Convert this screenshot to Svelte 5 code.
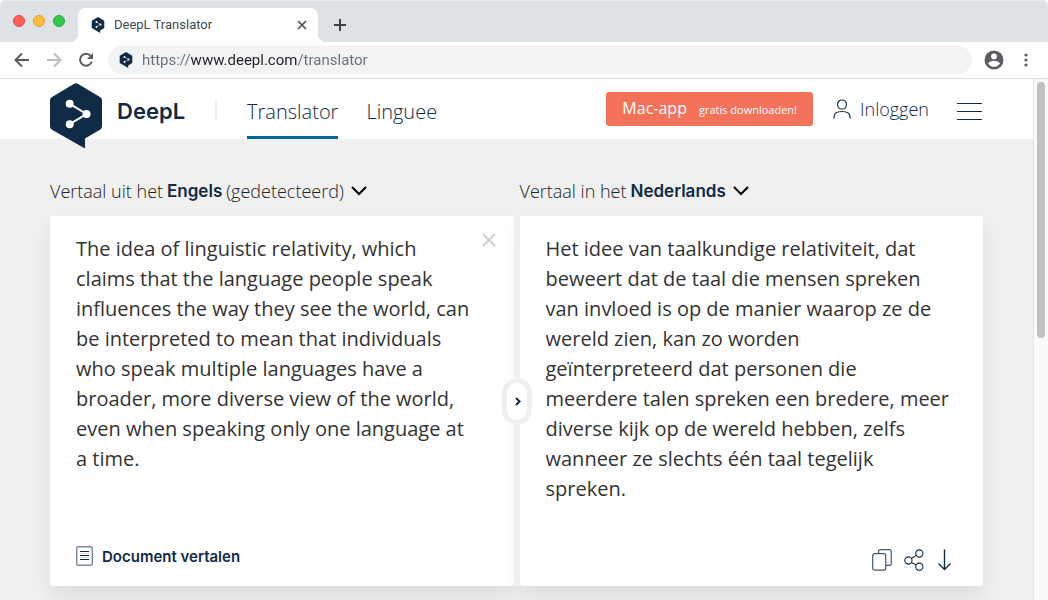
<script>
  let url = $state('https://www.deepl.com/translator');
  let source = $state(
    'The idea of linguistic relativity, which claims that the language people speak influences the way they see the world, can be interpreted to mean that individuals who speak multiple languages have a broader, more diverse view of the world, even when speaking only one language at a time.'
  );
  let target = $state(
    'Het idee van taalkundige relativiteit, dat beweert dat de taal die mensen spreken van invloed is op de manier waarop ze de wereld zien, kan zo worden geïnterpreteerd dat personen die meerdere talen spreken een bredere, meer diverse kijk op de wereld hebben, zelfs wanneer ze slechts één taal tegelijk spreken.'
  );
</script>

{#snippet logo()}
  <svg class="logo-mark" viewBox="0 0 52 66" aria-hidden="true">
    <path fill="#0f2b46" d="M0 17.5c0-1.5.7-2.6 2-3.4L24.2.7a3.6 3.6 0 0 1 3.6 0L50 14.1c1.3.8 2 1.9 2 3.4v25.8c0 1.5-.7 2.6-2 3.4L35 55.5V65.5L2 46.7c-1.300-.8-2-1.900-2-3.400z" />
    <path fill="none" stroke="#fff" stroke-width="2" d="M19.700 20.800 36.500 31 19.700 41.200" />
    <circle cx="19.700" cy="20.800" r="4" fill="#fff" />
    <circle cx="36.500" cy="31" r="4" fill="#fff" />
    <circle cx="19.700" cy="41.200" r="4" fill="#fff" />
  </svg>
{/snippet}

{#snippet chevron()}
  <svg class="chevron" width="16" height="10" viewBox="0 0 16 10" aria-hidden="true">
    <path d="m1 1 7 7 7-7" fill="none" stroke="#000" stroke-width="2" />
  </svg>
{/snippet}

<div class="browser">
  <div class="tab-strip">
    <div class="lights">
      <button class="light red" aria-label="Close window"></button>
      <button class="light yellow" aria-label="Minimise window"></button>
      <button class="light green" aria-label="Zoom window"></button>
    </div>
    <div class="tab">
      <span class="favicon">{@render logo()}</span>
      <span class="tab-title">DeepL Translator</span>
      <button class="icon-button" aria-label="Close tab">
        <svg width="10" height="10" viewBox="0 0 10 10"><path d="m1 1 8 8M9 1 1 9" fill="none" stroke="#45494d" stroke-width="1.600" /></svg>
      </button>
    </div>
    <button class="icon-button new-tab" aria-label="New tab">
      <svg width="12" height="12" viewBox="0 0 12 12"><path d="M6 0v12M0 6h12" fill="none" stroke="#3c4043" stroke-width="2" /></svg>
    </button>
  </div>

  <div class="toolbar">
    <button class="icon-button" aria-label="Back">
      <svg width="16" height="16" viewBox="0 0 16 16"><path d="M15 8H2M8 1.500 1.500 8 8 14.500" fill="none" stroke="#5a5e62" stroke-width="2" /></svg>
    </button>
    <button class="icon-button" aria-label="Forward">
      <svg width="16" height="16" viewBox="0 0 16 16"><path d="M1 8h13M8 1.500 14.500 8 8 14.500" fill="none" stroke="#babcbe" stroke-width="2" /></svg>
    </button>
    <button class="icon-button" aria-label="Reload">
      <svg width="16" height="16" viewBox="0 0 16 16">
        <path d="M12.700 3.800A6 6 0 1 0 13.800 9.500" fill="none" stroke="#5a5e62" stroke-width="2" />
        <path d="M15 1v6H9z" fill="#5a5e62" />
      </svg>
    </button>
    <div class="address">
      <span class="favicon">{@render logo()}</span>
      <input type="text" bind:value={url} aria-label="Address" spellcheck="false" />
    </div>
    <button class="icon-button profile" aria-label="Profile">
      <svg width="20" height="20" viewBox="0 0 20 20">
        <circle cx="10" cy="10" r="9.500" fill="#5a5d62" />
        <circle cx="10" cy="6.400" r="2.900" fill="#fff" />
        <path d="M4 13.600c1-2 3.800-2.900 6-2.900s5 .9 6 2.900a7.200 7.200 0 0 1-12 0z" fill="#fff" />
      </svg>
    </button>
    <button class="icon-button" aria-label="Menu">
      <svg width="4" height="14" viewBox="0 0 4 14" fill="#5a5e62"><circle cx="2" cy="2" r="1.600" /><circle cx="2" cy="7" r="1.600" /><circle cx="2" cy="12" r="1.600" /></svg>
    </button>
  </div>

  <div class="viewport">
    <div class="page">
      <header>
        <a class="brand" href="/">
          <span class="brand-logo">{@render logo()}</span>
          <span class="brand-name">DeepL</span>
        </a>
        <nav>
          <a class="active" href="/translator">Translator</a>
          <a href="/linguee">Linguee</a>
        </nav>
        <a class="download" href="/app"><span>Mac-app</span><small>gratis downloaden!</small></a>
        <a class="login" href="/login">
          <svg width="18" height="20" viewBox="0 0 18 20" fill="none" stroke="#0f2b46" stroke-width="1.200">
            <rect x="4.600" y="1" width="8.800" height="9" rx="4.200" />
            <path d="M1 19.500v-1.500c0-3.500 3-5.500 8-5.500s8 2 8 5.500v1.500" />
          </svg>
          Inloggen
        </a>
        <button class="icon-button burger" aria-label="Open menu">
          <svg width="25" height="18" viewBox="0 0 25 18"><path d="M0 .5h25M0 8.500h25M0 16.500h25" stroke="#0f2b46" /></svg>
        </button>
      </header>

      <main>
        <section>
          <div class="lang-bar">
            <label for="source-lang">Vertaal uit het</label>
            <select id="source-lang">
              <option>Engels</option>
            </select>
            <span>(gedetecteerd)</span>
            {@render chevron()}
          </div>
          <div class="panel">
            <div class="text-row">
              <textarea bind:value={source} aria-label="Brontekst" spellcheck="false"></textarea>
              <button class="icon-button" aria-label="Wissen">
                <svg width="14" height="14" viewBox="0 0 14 14"><path d="m1 0 12 12M13 0 1 12" fill="none" stroke="#cfcfcf" stroke-width="2" /></svg>
              </button>
            </div>
            <div class="actions">
              <button class="document">
                <svg width="17" height="20" viewBox="0 0 17 20" fill="none" stroke="#0f2b46">
                  <rect x=".7" y=".7" width="15.600" height="18.600" rx="1.500" stroke="#7a8896" stroke-width="1.400" />
                  <path d="M4 5.500h9M4 9.500h9M4 13.500h9" />
                  <path d="M4 7.500h9M4 11.500h9" stroke="#b9c1c9" stroke-width=".5" />
                </svg>
                Document vertalen
              </button>
            </div>
          </div>
        </section>

        <section>
          <div class="lang-bar">
            <label for="target-lang">Vertaal in het</label>
            <select id="target-lang">
              <option>Nederlands</option>
            </select>
            {@render chevron()}
          </div>
          <div class="panel right">
            <div class="text-row">
              <textarea bind:value={target} aria-label="Vertaling" spellcheck="false"></textarea>
            </div>
            <div class="actions tools">
              <button class="icon-button" aria-label="Kopiëren">
                <svg width="20" height="22" viewBox="0 0 20 22" fill="none" stroke="#42586c" stroke-width="1.200">
                  <path d="M6.600 4.500V2.600c0-1.100.7-1.900 1.900-1.900h8.800c1.200 0 1.900.8 1.900 1.900v11.800c0 1.200-.7 1.900-1.900 1.900h-3.500" />
                  <rect x=".7" y="4.700" width="13" height="16.500" rx="2" />
                </svg>
              </button>
              <button class="icon-button" aria-label="Delen">
                <svg width="20" height="22" viewBox="0 0 20 22" fill="none" stroke="#0f2b46" stroke-width="1.100">
                  <circle cx="4.400" cy="11.500" r="3.600" />
                  <circle cx="15.300" cy="4.500" r="3.600" />
                  <circle cx="15.300" cy="17.700" r="3.600" />
                  <path d="m7.400 9.500 4.900-3.100M7.400 13.400l4.900 2.500" />
                </svg>
              </button>
              <button class="icon-button" aria-label="Opslaan">
                <svg width="16" height="22" viewBox="0 0 16 22" fill="none" stroke="#0f2b46" stroke-width="1.400"><path d="M8.500 .5v20M2.500 14.500l6 6 6-6" /></svg>
              </button>
            </div>
            <button class="swap" aria-label="Talen omwisselen">
              <svg width="7" height="9" viewBox="0 0 7 9"><path d="m2 1 3.600 3.500L2 8" fill="none" stroke="#0f2b46" stroke-width="2" /></svg>
            </button>
          </div>
        </section>
      </main>
    </div>
    <div class="scrollbar"><div class="thumb"></div></div>
  </div>
</div>

<style>
  :global(body) {
    margin: 0;
    background: #fff;
  }

  .browser,
  .browser * {
    box-sizing: border-box;
  }

  .browser {
    display: flex;
    flex-direction: column;
    height: 100vh;
    overflow: hidden;
    border-radius: 6px 6px 0 0;
    font-family: 'Open Sans', 'Noto Sans', sans-serif;
    color: #0f2b46;
  }

  button,
  input,
  select,
  textarea {
    margin: 0;
    padding: 0;
    border: 0;
    background: none;
    color: inherit;
    font: inherit;
  }

  a {
    color: inherit;
    text-decoration: none;
  }

  svg {
    display: block;
    flex: none;
  }

  .icon-button {
    display: flex;
    flex: none;
  }

  .logo-mark {
    width: 100%;
    height: 100%;
  }

  .favicon {
    flex: none;
    width: 14px;
    height: 16px;
  }

  .tab-strip {
    display: flex;
    align-items: flex-end;
    flex: none;
    height: 42px;
    padding-left: 13px;
    border-top: 1px solid #e9ebed;
    background: #dee1e6;
  }

  .lights {
    display: flex;
    gap: 8px;
    padding-bottom: 15px;
  }

  .light {
    width: 12px;
    height: 12px;
    border: 1px solid #e2463f;
    border-radius: 50%;
    background: #fc615c;
  }

  .light.yellow {
    border-color: #dfa033;
    background: #fdbc40;
  }

  .light.green {
    border-color: #27ab35;
    background: #34c84a;
  }

  .tab {
    display: flex;
    align-items: center;
    gap: 9px;
    position: relative;
    width: 240px;
    height: 34px;
    margin-left: 13px;
    padding: 0 11px 1px 13px;
    border-radius: 8px 8px 0 0;
    background: #fff;
  }

  .tab::before,
  .tab::after {
    content: '';
    position: absolute;
    bottom: 0;
    width: 8px;
    height: 8px;
  }

  .tab::before {
    left: -8px;
    background: radial-gradient(circle at 0 0, transparent 8px, #fff 8px);
  }

  .tab::after {
    right: -8px;
    background: radial-gradient(circle at 100% 0, transparent 8px, #fff 8px);
  }

  .tab-title {
    flex: 1;
    font: 13px Roboto, sans-serif;
    color: #45494d;
  }

  .new-tab {
    padding: 0 0 11px 16px;
  }

  .toolbar {
    display: flex;
    align-items: center;
    flex: none;
    gap: 16px;
    height: 37px;
    padding: 0 20px 0 14px;
    border-bottom: 1px solid #dadce0;
    background: #fff;
  }

  .address {
    display: flex;
    align-items: center;
    flex: 1;
    gap: 9px;
    height: 28px;
    margin: 0 -4px 0 -2px;
    padding: 0 11px;
    border-radius: 14px;
    background: #f1f3f4;
  }

  /* the host part of the address is darker than the rest */
  .address input {
    flex: 1;
    min-width: 0;
    font: 15px Roboto, sans-serif;
    color: transparent;
    background: linear-gradient(90deg, #6b6f73 48px, #202124 48px, #202124 155px, #6b6f73 155px);
    background-clip: text;
  }

  .profile {
    margin-right: 4px;
  }

  .viewport {
    display: flex;
    flex: 1;
    min-height: 0;
  }

  .page {
    flex: 1;
    min-width: 0;
    overflow: hidden;
    background: #f0f0f0;
  }

  .scrollbar {
    flex: none;
    width: 15px;
    padding: 3px 3px 0;
    border-left: 1px solid #e4e4e4;
    background: #fafafa;
  }

  .thumb {
    width: 8px;
    height: 256px;
    border-radius: 4px;
    background: #c1c1c1;
  }

  header {
    display: flex;
    align-items: center;
    height: 60px;
    padding: 0 51px 0 50px;
    background: #fff;
  }

  .brand {
    display: flex;
    align-items: center;
    gap: 15px;
    height: 20px;
    padding-right: 30px;
    border-right: 2px solid #f0f0f0;
  }

  .brand-logo {
    width: 52px;
    height: 66px;
    margin-top: 14px;
  }

  .brand-name {
    padding-top: 3px;
    font: 600 22px Inter, sans-serif;
  }

  nav {
    display: flex;
    align-self: stretch;
    gap: 28px;
    flex: 1;
    margin-left: 30px;
    font-size: 20px;
    font-weight: 300;
    line-height: 66px;
  }

  nav a.active {
    height: 60px;
    border-bottom: 3px solid #006494;
  }

  .download {
    display: flex;
    align-items: baseline;
    gap: 12px;
    height: 34px;
    margin-right: 20px;
    padding: 0 16px;
    border-radius: 3px;
    background: #f4715a;
    color: #fff;
    font-size: 16px;
    line-height: 32px;
  }

  .download small {
    font-size: 11px;
  }

  .login {
    display: flex;
    align-items: center;
    gap: 9px;
    margin-right: 28px;
    font-size: 18px;
    font-weight: 300;
  }

  .burger {
    padding-top: 6px;
  }

  main {
    display: grid;
    grid-template-columns: 1fr 1fr;
    gap: 6px;
    padding: 0 50px 40px;
  }

  .lang-bar {
    display: flex;
    align-items: center;
    gap: 4px;
    height: 77px;
    padding-top: 27px;
    font-size: 18px;
    font-weight: 300;
    line-height: 24px;
    color: #222;
    white-space: nowrap;
  }

  select {
    appearance: none;
    field-sizing: content;
    height: 24px;
    font: 600 17px/24px Inter, sans-serif;
    color: #0f2b46;
  }

  .chevron {
    margin-left: 3px;
  }

  .panel {
    display: flex;
    flex-direction: column;
    position: relative;
    height: 370px;
    padding: 18px 18px 0 26px;
    border-radius: 3px;
    background: #fff;
    box-shadow: 0 10px 20px rgba(0, 0, 0, 0.08);
  }

  .panel.right {
    padding-right: 31px;
  }

  /* keeps the shadows out of the gap between the panels */
  .panel.right::before {
    content: '';
    position: absolute;
    top: 0;
    left: -6px;
    width: 6px;
    height: 100%;
    background: #f0f0f0;
  }

  .text-row {
    display: flex;
    align-items: flex-start;
    flex: 1;
    gap: 6px;
  }

  textarea {
    flex: 1;
    min-width: 0;
    height: 300px;
    overflow: hidden;
    resize: none;
    font-size: 20px;
    line-height: 30px;
    color: #333;
  }

  .actions {
    display: flex;
    align-items: center;
    height: 40px;
    margin-bottom: 6px;
  }

  .document {
    display: flex;
    align-items: center;
    gap: 9px;
    padding-bottom: 8px;
    font: 600 15px Inter, sans-serif;
  }

  .tools {
    justify-content: flex-end;
    gap: 12px;
  }

  .swap {
    display: flex;
    align-items: center;
    justify-content: center;
    position: absolute;
    top: 162px;
    left: -18px;
    width: 30px;
    height: 47px;
    padding-left: 2px;
    border: 5px solid #f0f0f0;
    border-radius: 15px;
    background: #fff;
  }
</style>
